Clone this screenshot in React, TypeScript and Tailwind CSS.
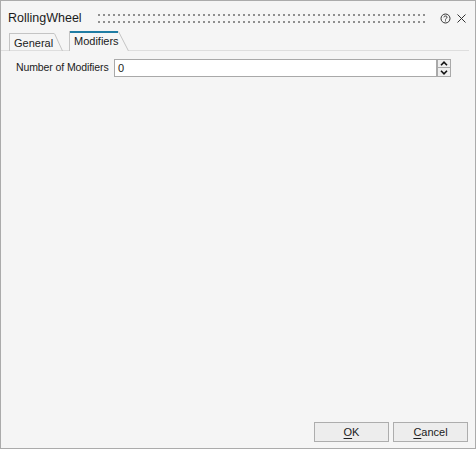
import React from "react";

function Slant({ w, h, color = "#c4c4c4" }: { w: number; h: number; color?: string }) {
  return (
    <svg width={w} height={h} className="block shrink-0">
      <line x1="0.5" y1="0.5" x2={w - 0.5} y2={h} stroke={color} strokeWidth="1" />
    </svg>
  );
}

function Chevron({ up }: { up?: boolean }) {
  return (
    <svg width="8" height="5" viewBox="0 0 8 5" className="block">
      <polyline
        points={up ? "1,4.2 4,1.2 7,4.2" : "1,0.8 4,3.8 7,0.8"}
        fill="none"
        stroke="#111"
        strokeWidth="1.6"
      />
    </svg>
  );
}

export default function App() {
  return (
    <div className="w-[476px] h-[449px] border border-[#ababab] bg-[#f5f5f5] flex flex-col font-['Liberation_Sans',Arial,sans-serif] text-[#1b1b1b] overflow-hidden">
      {/* title bar */}
      <div className="h-[30px] pt-[4px] flex items-center pl-[7px] pr-[9px] shrink-0">
        <span className="text-[12.5px] leading-none">RollingWheel</span>
        <svg className="flex-1 ml-[16px] mr-[12px] h-[9px] block">
          <defs>
            <pattern id="grip" width="5" height="7" patternUnits="userSpaceOnUse">
              <rect x="0" y="0" width="2" height="2" fill="#8f8f8f" />
            </pattern>
          </defs>
          <rect x="0" y="0" width="100%" height="9" fill="url(#grip)" />
        </svg>
        <svg width="11" height="11" viewBox="0 0 11 11" className="block">
          <circle cx="5.5" cy="5.5" r="4.5" fill="none" stroke="#333" strokeWidth="1" />
          <path d="M3.9 4.3 C3.9 2.6 7.1 2.6 7.1 4.2 C7.1 5.3 5.5 5.3 5.5 6.6" fill="none" stroke="#333" strokeWidth="1" />
          <rect x="5" y="7.4" width="1" height="1" fill="#333" />
        </svg>
        <svg width="9" height="9" viewBox="0 0 9 9" className="block ml-[6px]">
          <path d="M0.5 0.5 L8.5 8.5 M8.5 0.5 L0.5 8.5" stroke="#333" strokeWidth="1" />
        </svg>
      </div>

      {/* tabs */}
      <div className="h-[20px] flex items-end pl-[8px] mr-[6px] border-b border-[#dedede] shrink-0">
        <div className="flex h-[18px] mb-[-1px]">
          <div className="border-l border-t border-[#c4c4c4] pl-[4px] pr-[3px] w-[45px] text-[11px] leading-[18px]">
            General
          </div>
          <Slant w={9} h={18} />
        </div>
        <div className="flex h-[20px] ml-[6px] mb-[-1px] bg-[#f5f5f5]">
          <div className="border-l border-[#c4c4c4] flex flex-col w-[49px]">
            <div className="h-[2px] bg-[#1f7ca3]" />
            <div className="pl-[4px] text-[11px] leading-[17px]">Modifiers</div>
          </div>
          <Slant w={11} h={20} />
        </div>
      </div>

      {/* content */}
      <div className="pt-[8px] pl-[15px] flex items-center shrink-0">
        <span className="text-[10.5px] w-[98px] tracking-[-0.1px]">Number of Modifiers</span>
        <div className="w-[323px] h-[18px] bg-white border border-[#a9a9a9] flex items-center pl-[3px] text-[11px]">
          0
        </div>
        <div className="flex flex-col h-[18px] w-[14px]">
          <div className="h-[9px] border border-[#a9a9a9] bg-[#efefef] flex items-center justify-center">
            <Chevron up />
          </div>
          <div className="h-[9px] border border-t-0 border-[#a9a9a9] bg-[#efefef] flex items-center justify-center">
            <Chevron />
          </div>
        </div>
      </div>

      <div className="flex-1" />

      {/* buttons */}
      <div className="flex justify-end gap-[4px] pr-[7px] pb-[6px] shrink-0">
        <button className="w-[75px] h-[20px] bg-[#ededed] border border-[#adadad] text-[11px] leading-none">
          <span className="underline underline-offset-2">O</span>K
        </button>
        <button className="w-[75px] h-[20px] bg-[#ededed] border border-[#adadad] text-[11px] leading-none">
          <span className="underline underline-offset-2">C</span>ancel
        </button>
      </div>
    </div>
  );
}
